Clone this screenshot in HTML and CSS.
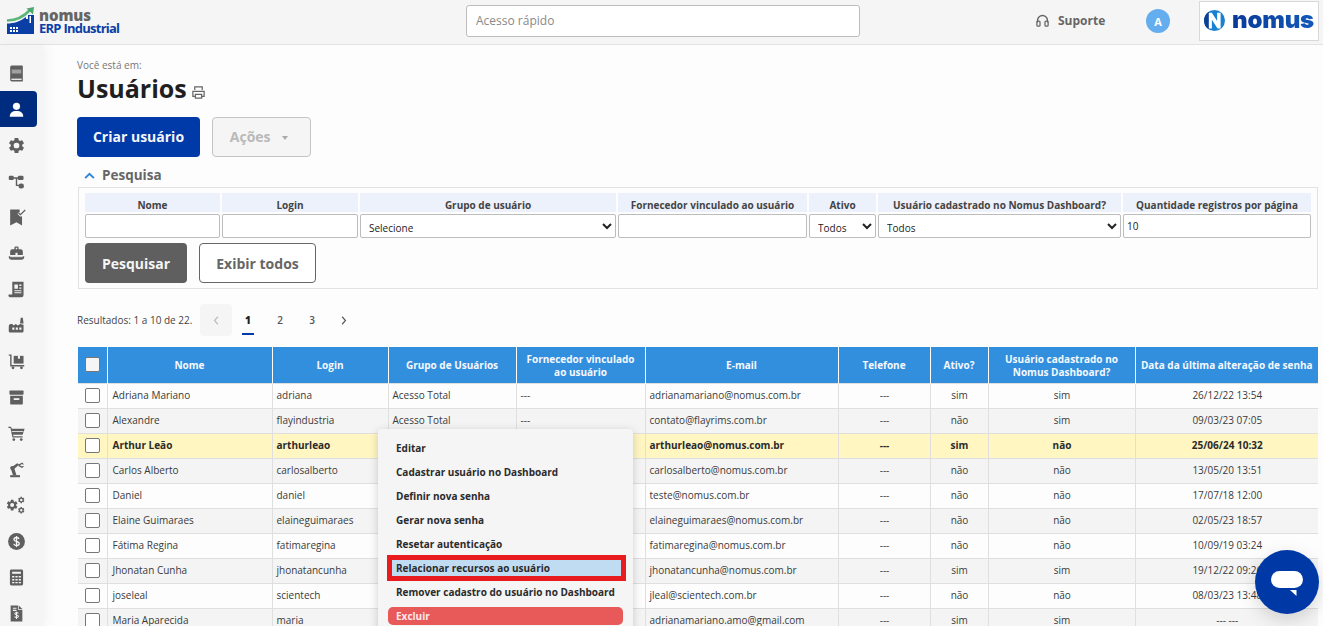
FILE: index.html
```html
<!DOCTYPE html>
<html lang="pt-BR">
<head>
<meta charset="utf-8">
<title>Usuários</title>
<link rel="stylesheet" href="styles.css">
</head>
<body>
<svg class="defs" width="0" height="0"><defs><symbol id="gear" viewBox="0 0 24 24"><path d="M19.140 12.940c.04-.3.06-.61.06-.94 0-.32-.02-.64-.07-.94l2.030-1.580a.49.49 0 0 0 .12-.61l-1.920-3.320a.488.488 0 0 0-.59-.22l-2.390.96c-.5-.38-1.030-.7-1.620-.94l-.36-2.540a.484.484 0 0 0-.48-.41h-3.840c-.24 0-.43.17-.47.41l-.36 2.540c-.59.24-1.130.57-1.620.94l-2.390-.96c-.22-.08-.47 0-.59.22L2.740 8.870c-.12.21-.08.47.12.61l2.030 1.580c-.05.3-.09.63-.09.94s.02.64.07.94l-2.030 1.580a.49.49 0 0 0-.12.61l1.920 3.320c.12.22.37.29.59.22l2.390-.96c.5.38 1.030.7 1.620.94l.36 2.540c.05.24.24.41.48.41h3.840c.24 0 .44-.17.47-.41l.36-2.540c.59-.24 1.130-.56 1.620-.94l2.390.96c.22.08.47 0 .59-.22l1.920-3.320c.12-.22.07-.47-.12-.61l-2.010-1.580zM12 15.600a3.600 3.600 0 1 1 0-7.200 3.600 3.600 0 0 1 0 7.200z"/></symbol></defs></svg>
<header class="topbar">
  <div class="brand">
    <svg class="brand-mark" viewBox="0 0 28 28" width="28" height="28">
      <path d="M0 27V16.500c7 0 13-2 19-6.500v2h2V8h6v19z" fill="#0b3fa6"/>
      <path d="M0 13.500C9 13.500 17 9.500 23 3" fill="none" stroke="#5cb67a" stroke-width="2.600"/>
      <path d="M19.500 1.500 27 0l-1 7.500z" fill="#4aa96c"/>
      <path d="M22.500 9h1.500v7h-1.500z" fill="#fff"/>
      <path d="M3 20h2v2H3zM6 20h2v2H6zM9 20h2v2H9zM3 23h2v2H3zM6 23h2v2H6zM9 23h2v2H9z" fill="#fff"/>
    </svg>
    <div class="brand-text">
      <span class="brand-top">nomus</span>
      <span class="brand-sub">ERP Industrial</span>
    </div>
  </div>
  <input class="quick" type="text" placeholder="Acesso rápido">
  <div class="support">
    <svg viewBox="0 0 24 24" width="15" height="15"><path d="M4 15v-3a8 8 0 0 1 16 0v3" fill="none" stroke="#666" stroke-width="2.200"/><rect x="3" y="13" width="5" height="8" rx="1.500" fill="none" stroke="#666" stroke-width="2"/><rect x="16" y="13" width="5" height="8" rx="1.500" fill="none" stroke="#666" stroke-width="2"/></svg>
    <span>Suporte</span>
  </div>
  <div class="avatar">A</div>
  <div class="client-logo">
    <svg viewBox="0 0 24 24" width="21" height="21"><circle cx="12" cy="12" r="12" fill="#1a80d0"/><path d="M0 12a12 12 0 0 1 6-10.400v20.800A12 12 0 0 1 0 12z" fill="#0b3f96"/><path d="M5.500 21V3h3.500l6 9.500V3H19v18h-3.500L9 11v10z" fill="#fff"/></svg>
    <span class="client-name">nomus</span>
  </div>
</header>
<div class="shell">
  <nav class="side">
    <a class="side-item"><svg viewBox="0 0 24 24"><path d="M6 2h13a1 1 0 0 1 1 1v19H6a2 2 0 0 1-2-2V4a2 2 0 0 1 2-2z"/><path d="M6 7h12v5H6z" fill="#a0a0a0"/><path d="M5.500 18.500H18.500v1.600H5.500z" fill="#f5f5f5"/></svg></a>
    <a class="side-item active"><svg viewBox="0 0 24 24"><circle cx="12" cy="8" r="4.500"/><path d="M3.500 21c0-4.500 3-7 8.500-7s8.500 2.500 8.500 7z"/></svg></a>
    <a class="side-item"><svg viewBox="0 0 24 24"><use href="#gear"/></svg></a>
    <a class="side-item"><svg viewBox="-1.500 -1.500 27 27"><rect x="1" y="4" width="7" height="6" rx="1.500"/><rect x="14" y="4" width="8" height="6" rx="1.500"/><rect x="15" y="15" width="7.500" height="7" rx="3"/><path d="M7 6h8v2H7zM11 7h2v11h-2zM11 16.500h5v2h-5z"/></svg></a>
    <a class="side-item"><svg viewBox="0 0 24 24"><path d="M4 2h12v7l3 2v11l-7-4-8 4z"/><path d="m14.500 6 2.500 2.500L23 2.500" fill="none" stroke="#f5f5f5" stroke-width="3.500"/><path d="m14.500 6 2.500 2.500L23 2.500" fill="none" stroke="#5f5f5f" stroke-width="1.600"/></svg></a>
    <a class="side-item"><svg viewBox="-1.500 -1.500 27 27"><path d="M9 6V4a2 2 0 0 1 2-2h2a2 2 0 0 1 2 2v2h3a3 3 0 0 1 3 3v5H3V9a3 3 0 0 1 3-3zm2-2v2h2V4z"/><rect x="10.500" y="11" width="3" height="4" fill="#f5f5f5"/><path d="M1 16h22v1.500a3.500 3.500 0 0 1-3.500 3.500h-15A3.500 3.500 0 0 1 1 17.500z"/><path d="M3 15.800h18v1.400H3z" fill="#f5f5f5"/></svg></a>
    <a class="side-item"><svg viewBox="-1.500 -1.500 27 27"><path d="M6 1h16v19a3 3 0 0 1-3 3H3a2.500 2.500 0 0 1-2-4h5z"/><path d="M9 5h5v6H9zM16 5h3v2h-3zM16 9h3v2h-3zM9 13h10v1.500H9zM9 16h10v1.500H9z" fill="#f5f5f5"/></svg></a>
    <a class="side-item"><svg viewBox="-1.500 -1.500 27 27"><path d="M18 1h3l1 8h-5z"/><path d="M1 13a3 3 0 0 1 3-3h2l2 2 3-2 3 2 3-2 5 1v9a2 2 0 0 1-2 2H3a2 2 0 0 1-2-2z"/><path d="M6 15h3v3H6zM11 15h3v3h-3zM16 15h3v3h-3z" fill="#f5f5f5"/></svg></a>
    <a class="side-item"><svg viewBox="-1.500 -1.500 27 27"><path d="M1 2h4v15h18v2H3V4H1z"/><path d="M8 4h14v11H8z"/><path d="M14 4h3v4h-3z" fill="#f5f5f5"/><circle cx="7" cy="21" r="2"/><circle cx="19" cy="21" r="2"/></svg></a>
    <a class="side-item"><svg viewBox="-1.500 -1.500 27 27"><rect x="2" y="2" width="20" height="6" rx="1"/><path d="M3 9.500h18V21a1 1 0 0 1-1 1H4a1 1 0 0 1-1-1z"/><path d="M8 13h8v2.500H8z" fill="#f5f5f5"/></svg></a>
    <a class="side-item"><svg viewBox="-2 -2 28 28"><path d="M0 2h4l1 3h19l-3 9H7l.5 2H21v2H6L3 4H0z"/><circle cx="8" cy="21" r="2"/><circle cx="19" cy="21" r="2"/><path d="M5 8.500h17v1.200H5z" fill="#f5f5f5"/></svg></a>
    <a class="side-item"><svg viewBox="-1.500 -1.500 27 27"><path d="M3 23v-3h14v3z"/><path d="m7 20-3-9 2-3 7-5 3 2-7 6 3 9z"/><circle cx="6" cy="10" r="3"/><path d="m15 5 5-3 3 3-4-.5-2 1.500 2 1.500 4-.5-3 3-5-2.500z"/></svg></a>
    <a class="side-item"><svg viewBox="0 0 24 24"><use href="#gear" x="-2" y="3" width="17" height="17"/><use href="#gear" x="13" y="0" width="10" height="10"/><use href="#gear" x="13" y="13" width="10" height="10"/></svg></a>
    <a class="side-item"><svg viewBox="-1 -1 26 26"><circle cx="12" cy="12" r="11.500"/><path d="M15.500 8.500C15 7 13.500 6.500 12 6.500c-2 0-3.500 1-3.500 2.700 0 3.600 7.300 1.900 7.300 5.500 0 1.800-1.700 2.800-3.800 2.800-1.800 0-3.300-.7-3.800-2.300M12 4.500v15" fill="none" stroke="#f5f5f5" stroke-width="1.800"/></svg></a>
    <a class="side-item"><svg viewBox="-1 -1 26 26"><rect x="3" y="1" width="18" height="22" rx="2"/><path d="M6 4h12v3H6zM6 10h3v2H6zM10.500 10h3v2h-3zM15 10h3v2h-3zM6 14h3v2H6zM10.500 14h3v2h-3zM15 14h3v2h-3zM6 18h3v2H6zM10.500 18h3v2h-3zM15 18h3v2h-3z" fill="#f5f5f5"/></svg></a>
    <a class="side-item"><svg viewBox="-1 -1 26 26"><path d="M4 1h10v6h6v16H4z"/><path d="m15 1 5 5h-5z"/><path d="M7 4h5v1.500H7zM7 7h5v1.500H7z" fill="#f5f5f5"/><path d="M14.500 12c-.5-1-1.500-1.300-2.500-1.300-1.400 0-2.300.7-2.300 1.700 0 2.300 5 1.100 5 3.400 0 1-1 1.700-2.500 1.700-1.200 0-2.200-.4-2.700-1.400M12 9.500v10" fill="none" stroke="#f5f5f5" stroke-width="1.400"/></svg></a>
  </nav>
  <main class="content">
    <p class="crumb">Você está em:</p>
    <div class="title-row">
      <h1>Usuários</h1>
      <svg class="print" viewBox="0 0 24 24" width="15" height="15"><path d="M6 8V3h12v5M6 18H3v-8h18v8h-3M7 15h10v6H7z" fill="none" stroke="#666" stroke-width="2"/></svg>
    </div>
    <div class="actions">
      <button class="btn btn-primary" type="button">Criar usuário</button>
      <button class="btn btn-disabled" type="button">Ações <i class="caret"></i></button>
    </div>
    <div class="search-head">
      <svg viewBox="0 0 12 8" width="11" height="7"><path d="M1 7l5-5 5 5" fill="none" stroke="#2f86d8" stroke-width="2.200"/></svg>
      <span>Pesquisa</span>
    </div>
    <section class="panel">
      <div class="filters">
        <label>Nome</label><label>Login</label><label>Grupo de usuário</label><label>Fornecedor vinculado ao usuário</label><label>Ativo</label><label>Usuário cadastrado no Nomus Dashboard?</label><label>Quantidade registros por página</label>
        <input type="text"><input type="text">
        <select><option>Selecione</option></select>
        <input type="text">
        <select><option>Todos</option></select>
        <select><option>Todos</option></select>
        <input type="text" value="10">
      </div>
      <div class="panel-btns">
        <button class="btn btn-dark" type="button">Pesquisar</button>
        <button class="btn btn-outline" type="button">Exibir todos</button>
      </div>
    </section>
    <div class="pager">
      <span class="results">Resultados: 1 a 10 de 22.</span>
      <span class="page page-off"><svg viewBox="0 0 8 12" width="6" height="9"><path d="M6.500 1 2 6l4.500 5" fill="none" stroke="#bbb" stroke-width="1.500"/></svg></span>
      <span class="page page-on">1</span>
      <span class="page">2</span>
      <span class="page">3</span>
      <span class="page"><svg viewBox="0 0 8 12" width="6" height="9"><path d="M1.500 1 6 6l-4.500 5" fill="none" stroke="#555" stroke-width="1.500"/></svg></span>
    </div>
    <table class="grid">
      <colgroup><col class="c1"><col class="c2"><col class="c3"><col class="c4"><col class="c5"><col class="c6"><col class="c7"><col class="c8"><col class="c9"><col class="c10"></colgroup>
      <thead>
        <tr><th><span class="box box-head"></span></th><th>Nome</th><th>Login</th><th>Grupo de Usuários</th><th>Fornecedor vinculado ao usuário</th><th>E-mail</th><th>Telefone</th><th>Ativo?</th><th>Usuário cadastrado no Nomus Dashboard?</th><th>Data da última alteração de senha</th></tr>
      </thead>
      <tbody>
        <tr><td class="m"><span class="box"></span></td><td>Adriana Mariano</td><td>adriana</td><td>Acesso Total</td><td>---</td><td>adrianamariano@nomus.com.br</td><td class="m">---</td><td class="m">sim</td><td class="m">sim</td><td class="m">26/12/22 13:54</td></tr>
        <tr><td class="m"><span class="box"></span></td><td>Alexandre</td><td>flayindustria</td><td>Acesso Total</td><td>---</td><td>contato@flayrims.com.br</td><td class="m">---</td><td class="m">não</td><td class="m">sim</td><td class="m">09/03/23 07:05</td></tr>
        <tr class="hl"><td class="m"><span class="box"></span></td><td>Arthur Leão</td><td>arthurleao</td><td>Acesso Total</td><td>---</td><td>arthurleao@nomus.com.br</td><td class="m">---</td><td class="m">sim</td><td class="m">não</td><td class="m">25/06/24 10:32</td></tr>
        <tr><td class="m"><span class="box"></span></td><td>Carlos Alberto</td><td>carlosalberto</td><td>Acesso Total</td><td>---</td><td>carlosalberto@nomus.com.br</td><td class="m">---</td><td class="m">não</td><td class="m">não</td><td class="m">13/05/20 13:51</td></tr>
        <tr><td class="m"><span class="box"></span></td><td>Daniel</td><td>daniel</td><td>Acesso Total</td><td>---</td><td>teste@nomus.com.br</td><td class="m">---</td><td class="m">não</td><td class="m">não</td><td class="m">17/07/18 12:00</td></tr>
        <tr><td class="m"><span class="box"></span></td><td>Elaine Guimaraes</td><td>elaineguimaraes</td><td>Acesso Total</td><td>---</td><td>elaineguimaraes@nomus.com.br</td><td class="m">---</td><td class="m">não</td><td class="m">não</td><td class="m">02/05/23 18:57</td></tr>
        <tr><td class="m"><span class="box"></span></td><td>Fátima Regina</td><td>fatimaregina</td><td>Acesso Total</td><td>---</td><td>fatimaregina@nomus.com.br</td><td class="m">---</td><td class="m">não</td><td class="m">não</td><td class="m">10/09/19 03:24</td></tr>
        <tr><td class="m"><span class="box"></span></td><td>Jhonatan Cunha</td><td>jhonatancunha</td><td>Acesso Total</td><td>---</td><td>jhonatancunha@nomus.com.br</td><td class="m">---</td><td class="m">sim</td><td class="m">sim</td><td class="m">19/12/22 09:26</td></tr>
        <tr><td class="m"><span class="box"></span></td><td>joseleal</td><td>scientech</td><td>Acesso Total</td><td>---</td><td>jleal@scientech.com.br</td><td class="m">---</td><td class="m">não</td><td class="m">não</td><td class="m">08/03/23 13:48</td></tr>
        <tr><td class="m"><span class="box"></span></td><td>Maria Aparecida</td><td>maria</td><td>Acesso Total</td><td>---</td><td>adrianamariano.amo@gmail.com</td><td class="m">---</td><td class="m">sim</td><td class="m">sim</td><td class="m">--- ---</td></tr>
      </tbody>
    </table>
  </main>
</div>
<div class="menu">
  <a>Editar</a>
  <a>Cadastrar usuário no Dashboard</a>
  <a>Definir nova senha</a>
  <a>Gerar nova senha</a>
  <a>Resetar autenticação</a>
  <a class="marked">Relacionar recursos ao usuário</a>
  <a>Remover cadastro do usuário no Dashboard</a>
  <a class="danger">Excluir</a>
</div>
<div class="chat">
  <svg viewBox="0 0 32 26" width="32" height="26"><rect x="0" y="0" width="32" height="17" rx="8.500" fill="#fff"/><path d="M19 19h6.500v6z" fill="#fff"/></svg>
</div>
</body>
</html>
```
FILE: styles.css
```css
* { box-sizing: border-box; }
html, body { margin: 0; height: 626px; overflow: hidden; }
body { font-family: "Open Sans", "Liberation Sans", sans-serif; font-size: 10px; color: #333; background: #fdfdfd; }
.defs { position: absolute; }

.topbar { height: 45px; display: flex; align-items: center; background: #f5f5f5; border-bottom: 1px solid #e3e3e3; }
.brand { width: 466px; display: flex; align-items: flex-start; padding: 7px 0 0 7px; height: 44px; }
.brand-mark { flex: none; }
.brand-text { margin-left: 4px; display: flex; flex-direction: column; }
.brand-top { font-size: 15px; line-height: 12px; margin-top: 2px; font-weight: 800; color: #666; letter-spacing: -.1px; }
.brand-sub { font-size: 13px; line-height: 15px; font-weight: 700; color: #0b3fa6; letter-spacing: -.75px; white-space: nowrap; }
.quick { width: 394px; height: 32px; border: 1px solid #bdbdbd; border-radius: 3px; background: #fff; padding: 0 9px 2px; font: 12px "Open Sans", sans-serif; color: #777; margin-bottom: 2px; }
.quick::placeholder { color: #888; }
.support { margin-left: 175px; width: 111px; display: flex; align-items: center; gap: 8px; font-size: 12px; font-weight: 700; color: #666; margin-bottom: 4px; }
.avatar { width: 24px; height: 24px; border-radius: 50%; background: #64aef0; color: #fff; font-size: 11px; font-weight: 700; display: flex; align-items: center; justify-content: center; margin-bottom: 2px; }
.client-logo { margin-left: 29px; width: 120px; height: 40px; margin-bottom: 3px; border: 1px solid #d9d9d9; background: #fff; display: flex; align-items: center; padding-left: 4px; gap: 7px; }
.client-name { font-family: "Inter", "Liberation Sans", sans-serif; font-size: 24px; font-weight: 900; letter-spacing: -.2px; line-height: 1; margin-bottom: 2px; color: #0f46a0; background: linear-gradient(90deg, #0a3a9a, #1259b8); -webkit-background-clip: text; background-clip: text; -webkit-text-fill-color: transparent; }

.shell { display: flex; height: 581px; }
.side { width: 44px; flex: none; background: #f5f5f5; padding-top: 10px; box-shadow: 4px 0 10px rgba(0,0,0,.04); }
.side-item { display: flex; width: 37px; height: 36px; align-items: center; justify-content: center; padding-right: 5px; border-radius: 0 4px 4px 0; }
.side-item svg { width: 19px; height: 19px; fill: #5f5f5f; }
.side-item.active { background: #002c80; }
.side-item.active svg { fill: #fff; }

.content { flex: 1; min-width: 0; padding: 13px 5px 0 33px; overflow: hidden; }
.crumb { margin: 0; font-size: 10px; line-height: 14px; color: #777; }
.title-row { display: flex; align-items: center; gap: 4px; height: 26px; margin-top: 3px; }
h1 { margin: 0; font-size: 25px; line-height: 26px; font-weight: 700; color: #1f1f1f; }
.print { margin-top: 8px; }
.actions { display: flex; gap: 12px; margin-top: 16px; }
.btn { height: 40px; border-radius: 4px; font: 700 14px "Open Sans", sans-serif; border: 1px solid transparent; padding: 0; }
.actions .btn { padding-bottom: 2px; }
.btn-primary { width: 123px; background: #0039a8; color: #f4f6fb; }
.btn-disabled { width: 99px; background: #f5f5f5; border-color: #c4c4c4; color: #b9b9b9; padding-right: 5px; }
.caret { display: inline-block; border: 3.500px solid transparent; border-top: 4px solid #aaa; border-bottom: 0; margin-left: 8px; vertical-align: middle; }
.search-head { display: flex; align-items: center; gap: 7px; margin: 10px 0 0 7px; height: 16px; font-size: 13.500px; font-weight: 700; color: #666; }
.panel { margin: 4px 0 0 1px; height: 102px; border: 1px solid #e2e2e2; padding: 5px 6px 0; }
.filters { display: grid; grid-template-columns: 135px 136px 256px 189px 67px 243px 188px; grid-template-rows: 19px 24px; column-gap: 2px; row-gap: 2px; }
.filters label { background: #edf1fb; font-size: 10px; font-weight: 700; color: #444; text-align: center; line-height: 24px; height: 19px; overflow: hidden; white-space: nowrap; }
.filters input, .filters select { width: 100%; height: 24px; border: 1px solid #bdbdbd; border-radius: 2px; background: #fff; font: 10px "Open Sans", sans-serif; color: #222; padding: 0 3px; }
.filters select { padding: 4px 0 0 4px; }
.panel-btns { display: flex; gap: 12px; margin-top: 5px; }
.btn-dark { width: 102px; background: #5f5f5f; color: #f5f5f5; }
.btn-outline { width: 117px; background: #fff; border-color: #666; color: #666; }

.pager { display: flex; align-items: center; margin: 15px 0 0; height: 32px; }
.results { width: 123px; font-size: 10px; color: #444; }
.page { width: 32px; height: 32px; display: flex; align-items: center; justify-content: center; font-size: 10px; color: #555; font-weight: 600; position: relative; }
.page-off { background: #f5f5f5; border-radius: 4px; }
.page-on { color: #222; font-weight: 800; }
.page-on::after { content: ""; position: absolute; left: 10px; right: 10px; bottom: 1px; height: 2px; background: #0039a8; }

.grid { margin: 11px 0 0 1px; width: 1240px; border-collapse: collapse; table-layout: fixed; font-size: 10px; }
.c1 { width: 29px; } .c2 { width: 165px; } .c3 { width: 116px; } .c4 { width: 128px; } .c5 { width: 129px; }
.c6 { width: 193px; } .c7 { width: 92px; } .c8 { width: 58px; } .c9 { width: 147px; } .c10 { width: 183px; }
.grid th { height: 36px; padding: 2px 4px 0; background: #328fde; color: #f5f8fd; font-weight: 700; text-align: center; line-height: 13px; border-left: 1px solid #fff; border-right: 1px solid #fff; }
.grid th:first-child { border-left: 0; padding: 0; }
.grid th:last-child { border-right: 0; }
.grid td { height: 25px; padding: 0 3px 2px 4px; border: 1px solid #dfdfdf; white-space: nowrap; overflow: hidden; color: #3a3a3a; }
.grid td:first-child { border-left: 0; padding: 0; }
.grid td:nth-child(2) { padding-left: 5px; }
.grid td:last-child { border-right: 0; }
.grid tbody tr:nth-child(even) td { background: #f4f4f4; }
.grid tbody tr:nth-child(odd) td { background: #fdfdfd; }
.grid tbody tr.hl td { background: #fff6c2; font-weight: 700; color: #2b2b2b; }
.grid td.m { text-align: center; }
.box { display: inline-block; width: 15px; height: 15px; background: #fff; border: 1px solid #777; border-radius: 2px; vertical-align: middle; }
.box-head { background: #f5f5f5; border-color: #777; }

.menu { position: absolute; left: 378px; top: 429px; width: 255px; height: 210px; padding: 10px 10px 0; background: #f5f5f5; border-radius: 4px; box-shadow: 0 2px 10px rgba(0,0,0,.18); }
.menu a { display: block; position: relative; height: 18px; margin-bottom: 6px; padding-left: 8px; line-height: 18px; font-size: 10px; font-weight: 700; color: #2b2b2b; white-space: nowrap; }
.menu .marked { background: #c0dcf3; }
.menu .marked::after { content: ""; position: absolute; top: -4px; bottom: -4px; left: -1px; right: -3px; border: 5px solid #e81c1f; }
.menu .danger { background: #e85a5a; color: #fde9e9; border-radius: 5px; }

.chat { position: fixed; left: 1255px; top: 550px; width: 64px; height: 64px; border-radius: 50%; background: #0039a6; box-shadow: 0 6px 18px rgba(0,0,0,.15); display: flex; align-items: center; justify-content: center; padding-top: 4px; }
```
